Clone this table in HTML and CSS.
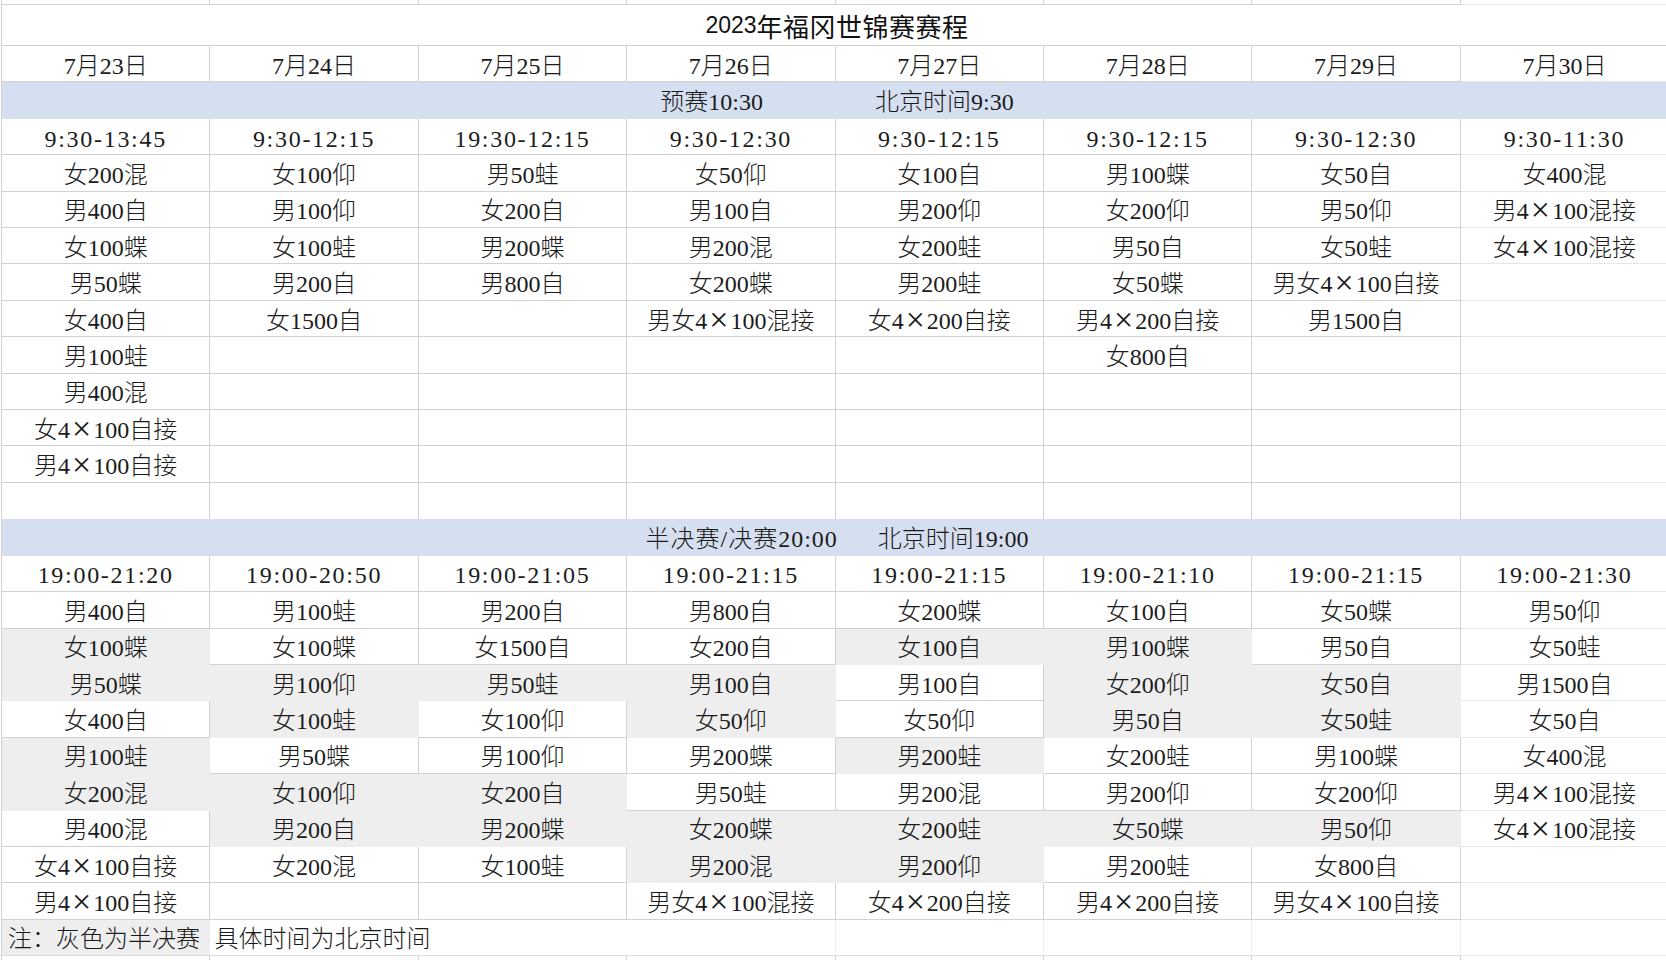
FILE: index.html
```html
<!DOCTYPE html>
<html lang="zh-CN">
<head>
<meta charset="utf-8">
<title>2023年福冈世锦赛赛程</title>
<link rel="stylesheet" href="styles.css">
</head>
<body>
<div class="sheet">
  <div class="row sliver"><div></div><div></div><div></div><div></div><div></div><div></div><div></div><div></div></div>
  <div class="title"><span class="yr">2023</span>年福冈世锦赛赛程</div>

  <div class="row dates">
    <div>7月23日</div><div>7月24日</div><div>7月25日</div><div>7月26日</div>
    <div>7月27日</div><div>7月28日</div><div>7月29日</div><div>7月30日</div>
  </div>
  <div class="band band-top"><span>预赛10:30</span><span>北京时间9:30</span></div>
  <div class="row times">
    <div>9:30-13:45</div><div>9:30-12:15</div><div>19:30-12:15</div><div>9:30-12:30</div>
    <div>9:30-12:15</div><div>9:30-12:15</div><div>9:30-12:30</div><div>9:30-11:30</div>
  </div>
  <div class="row">
    <div>女200混</div><div>女100仰</div><div>男50蛙</div><div>女50仰</div>
    <div>女100自</div><div>男100蝶</div><div>女50自</div><div>女400混</div>
  </div>
  <div class="row">
    <div>男400自</div><div>男100仰</div><div>女200自</div><div>男100自</div>
    <div>男200仰</div><div>女200仰</div><div>男50仰</div><div>男4<span class="x">×</span>100混接</div>
  </div>
  <div class="row">
    <div>女100蝶</div><div>女100蛙</div><div>男200蝶</div><div>男200混</div>
    <div>女200蛙</div><div>男50自</div><div>女50蛙</div><div>女4<span class="x">×</span>100混接</div>
  </div>
  <div class="row">
    <div>男50蝶</div><div>男200自</div><div>男800自</div><div>女200蝶</div>
    <div>男200蛙</div><div>女50蝶</div><div>男女4<span class="x">×</span>100自接</div><div></div>
  </div>
  <div class="row">
    <div>女400自</div><div>女1500自</div><div></div><div>男女4<span class="x">×</span>100混接</div>
    <div>女4<span class="x">×</span>200自接</div><div>男4<span class="x">×</span>200自接</div><div>男1500自</div><div></div>
  </div>
  <div class="row">
    <div>男100蛙</div><div></div><div></div><div></div>
    <div></div><div>女800自</div><div></div><div></div>
  </div>
  <div class="row">
    <div>男400混</div><div></div><div></div><div></div>
    <div></div><div></div><div></div><div></div>
  </div>
  <div class="row">
    <div>女4<span class="x">×</span>100自接</div><div></div><div></div><div></div>
    <div></div><div></div><div></div><div></div>
  </div>
  <div class="row">
    <div>男4<span class="x">×</span>100自接</div><div></div><div></div><div></div>
    <div></div><div></div><div></div><div></div>
  </div>
  <div class="row blank">
    <div></div><div></div><div></div><div></div><div></div><div></div><div></div><div></div>
  </div>

  <div class="band band-bottom"><span>半决赛/决赛20:00</span><span>北京时间19:00</span></div>
  <div class="row times">
    <div>19:00-21:20</div><div>19:00-20:50</div><div>19:00-21:05</div><div>19:00-21:15</div>
    <div>19:00-21:15</div><div>19:00-21:10</div><div>19:00-21:15</div><div>19:00-21:30</div>
  </div>
  <div class="row">
    <div>男400自</div><div>男100蛙</div><div>男200自</div><div>男800自</div>
    <div>女200蝶</div><div>女100自</div><div>女50蝶</div><div>男50仰</div>
  </div>
  <div class="row">
    <div class="g">女100蝶</div><div>女100蝶</div><div>女1500自</div><div>女200自</div>
    <div class="g">女100自</div><div class="g">男100蝶</div><div>男50自</div><div>女50蛙</div>
  </div>
  <div class="row">
    <div class="g">男50蝶</div><div class="g">男100仰</div><div class="g">男50蛙</div><div class="g">男100自</div>
    <div>男100自</div><div class="g">女200仰</div><div class="g">女50自</div><div>男1500自</div>
  </div>
  <div class="row">
    <div>女400自</div><div class="g">女100蛙</div><div>女100仰</div><div class="g">女50仰</div>
    <div>女50仰</div><div class="g">男50自</div><div class="g">女50蛙</div><div>女50自</div>
  </div>
  <div class="row">
    <div class="g">男100蛙</div><div>男50蝶</div><div>男100仰</div><div>男200蝶</div>
    <div class="g">男200蛙</div><div>女200蛙</div><div>男100蝶</div><div>女400混</div>
  </div>
  <div class="row">
    <div class="g">女200混</div><div class="g">女100仰</div><div class="g">女200自</div><div>男50蛙</div>
    <div>男200混</div><div>男200仰</div><div>女200仰</div><div>男4<span class="x">×</span>100混接</div>
  </div>
  <div class="row">
    <div>男400混</div><div class="g">男200自</div><div class="g">男200蝶</div><div class="g">女200蝶</div>
    <div class="g">女200蛙</div><div class="g">女50蝶</div><div class="g">男50仰</div><div>女4<span class="x">×</span>100混接</div>
  </div>
  <div class="row">
    <div>女4<span class="x">×</span>100自接</div><div>女200混</div><div>女100蛙</div><div class="g">男200混</div>
    <div class="g">男200仰</div><div>男200蛙</div><div>女800自</div><div></div>
  </div>
  <div class="row">
    <div>男4<span class="x">×</span>100自接</div><div></div><div></div><div>男女4<span class="x">×</span>100混接</div>
    <div>女4<span class="x">×</span>200自接</div><div>男4<span class="x">×</span>200自接</div><div>男女4<span class="x">×</span>100自接</div><div></div>
  </div>
  <div class="row note">
    <div class="g note-a">注：灰色为半决赛</div>
    <div class="note-b">具体时间为北京时间</div>
    <div></div><div></div><div></div><div></div><div></div>
  </div>
  <div class="row sliver tail"><div></div><div></div><div></div><div></div><div></div><div></div><div></div><div></div></div>
</div>
</body>
</html>
```

FILE: styles.css
```css
html, body {
  margin: 0;
  padding: 0;
  background: #ffffff;
  overflow: hidden;
}

.sheet {
  width: 1666px;
  height: 960px;
  overflow: hidden;
  font-family: "Liberation Serif", "Noto Sans CJK SC", serif;
  font-size: 24px;
  font-weight: 300;
  color: #1b1b1b;
}

.sheet > * {
  margin-left: 1px;
  border-left: 1px solid #d2d2d2;
  box-sizing: border-box;
}

.row {
  display: grid;
  grid-template-columns: repeat(8, 208.4px);
  height: 36.42px;
}

.row > div {
  box-sizing: border-box;
  border-right: 1px solid #d2d2d2;
  border-bottom: 1px solid #d2d2d2;
  display: flex;
  align-items: center;
  justify-content: center;
  white-space: nowrap;
  line-height: 1;
  padding-top: 4px;
}

.row > div:last-child {
  border-bottom-color: #e6e6e6;
}

.row > div.g {
  background: #eeeeee;
  border-color: #eeeeee;
}

.x {
  font-size: 34px;
  font-weight: 300;
  line-height: 0;
  margin: 0 2px;
  position: relative;
  top: -1px;
}

.sliver {
  height: 5px;
}

.sliver > div {
  padding: 0;
}

.title {
  height: 41px;
  border-bottom: 1px solid #d2d2d2;
  display: flex;
  align-items: center;
  justify-content: center;
  padding-top: 1px;
  padding-left: 6px;
  font-family: "Noto Sans CJK SC", sans-serif;
  font-weight: 400;
  font-size: 26px;
  letter-spacing: 0.5px;
  color: #111111;
}

.title .yr {
  font-family: "Liberation Sans", sans-serif;
  font-size: 23px;
  letter-spacing: 0;
}

.band {
  height: 36.42px;
  background: #d6dfef;
  display: flex;
  align-items: center;
  justify-content: center;
  padding-left: 6px;
  padding-top: 3px;
  line-height: 1;
}

.band-top {
  gap: 112px;
}

.band-bottom {
  gap: 40px;
}

.band-bottom span:first-child {
  letter-spacing: 1px;
}

.times > div {
  letter-spacing: 1.7px;
}

.blank > div {
  border-bottom: none;
}

.note > div {
  justify-content: flex-start;
  padding-left: 6px;
  border-bottom-color: #dcdcdc;
}

.note > div.note-a {
  border-right: none;
  border-bottom-color: #dcdcdc;
}

.note > div.note-b {
  grid-column: span 2;
  overflow: visible;
  padding-left: 4px;
  border-right: none;
}

.note > div:nth-child(n+3) {
  border-right-color: #f0f0f0;
}

.tail > div {
  border-bottom: none;
}
```
